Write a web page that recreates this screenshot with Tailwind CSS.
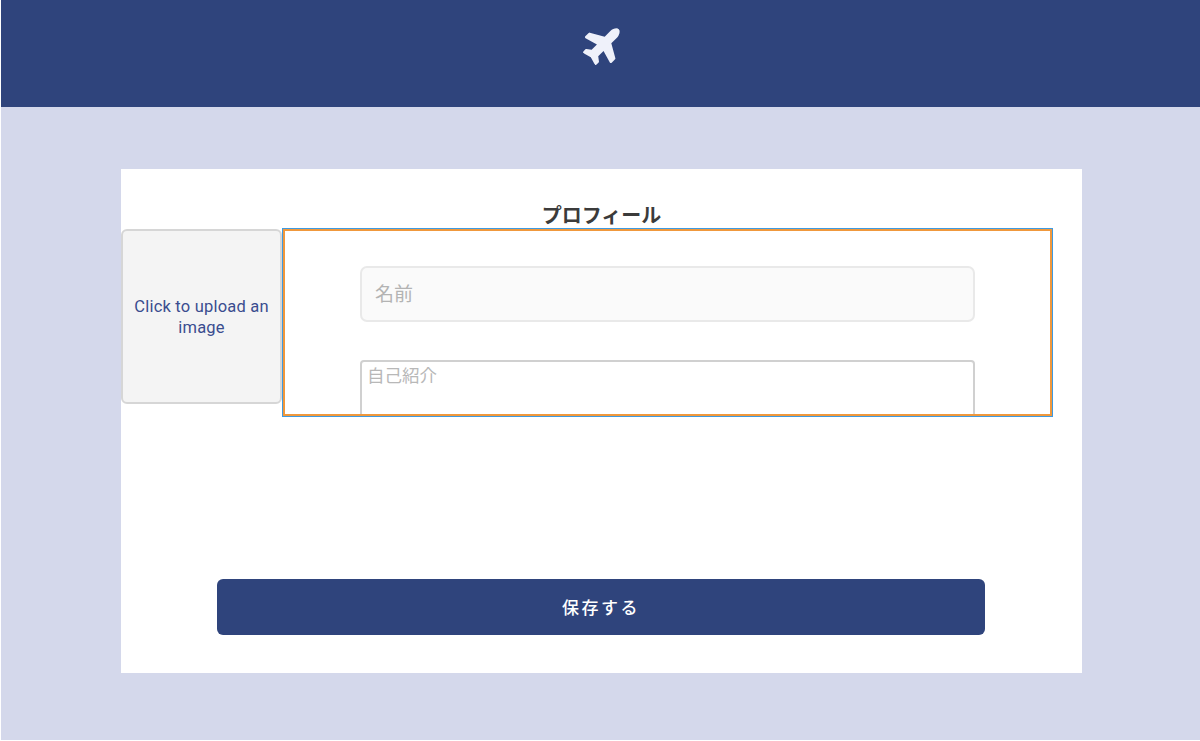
<!DOCTYPE html>
<html lang="ja">
<head>
  <meta charset="UTF-8">
  <meta name="viewport" content="width=device-width, initial-scale=1.0">
  <title>プロフィール</title>
  <script src="https://cdn.jsdelivr.net/npm/@tailwindcss/browser@4"></script>
</head>
<body class="bg-white font-['Roboto','Noto_Sans_CJK_JP',sans-serif]">
  <div class="ml-px h-[740px] bg-[#d4d8eb] flex flex-col overflow-hidden">
    <!-- Header -->
    <header class="h-[107px] shrink-0 bg-[#2f447c] flex items-center justify-center">
      <svg class="w-[42px] h-[42px] -rotate-45 mt-[-20px] ml-[6px]" viewBox="0 0 576 512" fill="#eff1fa">
        <path d="M480 192H365.71L260.61 8.06A16.014 16.014 0 0 0 246.71 0h-65.5c-10.63 0-18.3 10.17-15.38 20.39L214.86 192H112l-43.2-57.6c-3.02-4.03-7.77-6.4-12.8-6.4H16.01C5.6 128-2.04 137.78.49 147.88L32 256 .49 364.12C-2.04 374.22 5.6 384 16.01 384H56c5.04 0 9.78-2.37 12.8-6.4L112 320h102.86l-49.03 171.6c-2.92 10.22 4.75 20.4 15.38 20.4h65.5c5.74 0 11.04-3.08 13.89-8.06L365.71 320H480c35.35 0 96-28.65 96-64s-60.65-64-96-64z"/>
      </svg>
    </header>

    <!-- Profile card -->
    <main class="w-[961px] h-[504px] ml-[120px] mt-[62px] bg-white flex flex-col">
      <h1 class="h-[59px] pt-[34px] text-center text-[20px] leading-[26px] font-bold text-[#3b3b3b]">プロフィール</h1>

      <div class="flex items-start h-[189px]">
        <button class="w-[161px] h-[175px] mt-px shrink-0 bg-[#f4f4f4] border-2 border-[#d6d6d6] rounded-[6px] px-2 text-[#3a4d8f] text-[16.5px] tracking-[0.2px] leading-[21px]">Click to upload an image</button>

        <form class="w-[771px] h-[189px] border border-[#3f9ae0] overflow-hidden">
          <div class="h-full border-2 border-[#f0983c] overflow-hidden px-[75px] pt-[35px] flex flex-col gap-[38px]">
            <input class="w-[615px] h-[56px] shrink-0 bg-[#fafafa] border-2 border-[#e9e9e9] rounded-[7px] px-[13px] text-[19px] placeholder:text-[#b3b3b3]" placeholder="名前">
            <textarea class="w-[615px] h-[80px] shrink-0 resize-none bg-white border-2 border-[#d0d0d0] rounded-[4px] px-[5px] py-[2px] text-[17.5px] leading-[25px] placeholder:text-[#b8b8b8]" placeholder="自己紹介"></textarea>
          </div>
        </form>
      </div>

      <button class="w-[768px] h-[56px] mt-[162px] ml-[96px] bg-[#2f447c] rounded-[6px] text-white text-[17px] leading-[28px] pt-px font-medium tracking-[2.5px]">保存する</button>
    </main>
  </div>
</body>
</html>
